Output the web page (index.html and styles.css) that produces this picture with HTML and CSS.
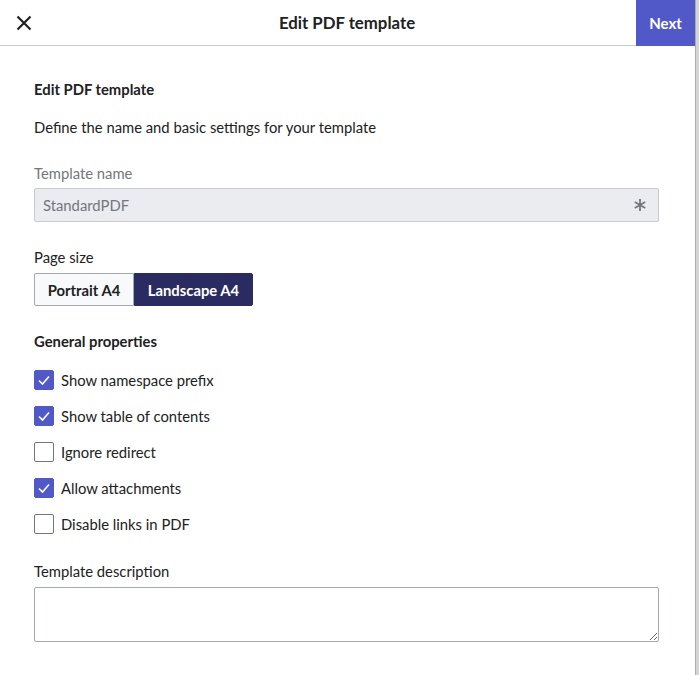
FILE: index.html
```html
<!DOCTYPE html>
<html lang="en">
<head>
    <meta charset="UTF-8">
    <title>Edit PDF template</title>
    <link rel="stylesheet" href="styles.css">
</head>
<body>
    <div class="dialog">
        <div class="head">
            <button class="close" aria-label="Close">
                <svg width="16" height="16" viewBox="0 0 16 16"><path d="M1.5 1.5 L14.5 14.5 M14.5 1.5 L1.5 14.5" stroke="#202122" stroke-width="2.2" fill="none"/></svg>
            </button>
            <div class="title">Edit PDF template</div>
            <button class="next">Next</button>
        </div>
        <div class="body">
            <h2>Edit PDF template</h2>
            <p class="intro">Define the name and basic settings for your template</p>

            <div class="label muted">Template name</div>
            <div class="input disabled">
                <span>StandardPDF</span>
                <svg class="req" width="14" height="14" viewBox="0 0 14 14"><path d="M7 1 V13 M1.8 4 L12.2 10 M12.2 4 L1.8 10" stroke="#72777d" stroke-width="1.8" fill="none"/></svg>
            </div>

            <div class="label gap">Page size</div>
            <div class="toggle">
                <button class="portrait">Portrait A4</button>
                <button class="on">Landscape A4</button>
            </div>

            <h3>General properties</h3>
            <ul class="checks">
                <li><span class="box on"></span>Show namespace prefix</li>
                <li><span class="box on"></span>Show table of contents</li>
                <li><span class="box"></span>Ignore redirect</li>
                <li><span class="box on"></span>Allow attachments</li>
                <li><span class="box"></span>Disable links in PDF</li>
            </ul>

            <div class="label desc">Template description</div>
            <textarea></textarea>
        </div>
    </div>
    <div class="scroll"></div>
</body>
</html>
```

FILE: styles.css
```css
body {margin: 0; font-family: Lato, "Open Sans", sans-serif; color: #202122; font-size: 14.8px; line-height: 20px; display: flex; background: #fff;}
.dialog {width: 695px; height: 675px;}
.scroll {width: 4px; height: 675px; background: #d2d4d8; border-left: 1px solid #a9adb3; box-sizing: border-box;}

.head {display: flex; align-items: center; height: 45px; border-bottom: 1px solid #c8ccd1;}
.close {width: 42px; height: 45px; border: 0; background: none; padding: 0 0 0 5px; display: flex; align-items: center; justify-content: center;}
.title {flex: 1; text-align: center; font-size: 16.8px; font-weight: 700; padding-left: 16px; color: #202122;}
.next {width: 59px; height: 46px; margin-bottom: -1px; border: 0; background: #5159c8; color: #fff; font-family: inherit; font-size: 15px; font-weight: 700;}

.body {padding: 33px 36px 0 34px;}
h2, h3 {font-size: 14.8px; font-weight: 700; margin: 0; line-height: 20px;}
.intro {margin: 18px 0 0;}
h3 {margin-top: 25px;}

.label {margin-top: 26px;}
.muted {color: #72777d;}
.gap {margin-top: 25px;}

.input {display: flex; justify-content: space-between; align-items: center; margin-top: 5px; height: 34px; box-sizing: border-box; border: 1px solid #c8ccd1; border-radius: 2px; padding: 0 11px 0 8px;}
.disabled {background: #eaecf0; color: #72777d;}

.toggle {display: flex; margin-top: 6px;}
.toggle button {height: 33px; width: 119px; font-family: inherit; font-size: 14.8px; font-weight: 700; border: 1px solid #a2a9b1; background: #f8f9fa; color: #202122; padding: 0; border-radius: 2px 0 0 2px;}
.toggle .portrait {width: 100px;}
.toggle button.on {background: #2a2c61; border-color: #2a2c61; color: #fff; border-radius: 0 2px 2px 0;}

.checks {list-style: none; margin: 11px 0 0; padding: 0;}
.checks li {display: flex; align-items: center; height: 36px; gap: 7px;}
.box {width: 20px; height: 20px; box-sizing: border-box; border: 1px solid #72777d; border-radius: 2px; background: #fff;}
.box.on {border-color: #5159c8; background: #5159c8 url("data:image/svg+xml,%3Csvg xmlns='http://www.w3.org/2000/svg' width='20' height='20'%3E%3Cpath d='M5 10.5 L8.5 14 L15 6.5' stroke='white' stroke-width='1.6' fill='none'/%3E%3C/svg%3E") center no-repeat;}

.desc {margin-top: 19px;}
textarea {display: block; width: 625px; height: 55px; margin-top: 6px; box-sizing: border-box; border: 1px solid #a2a9b1; border-radius: 2px;}
```
